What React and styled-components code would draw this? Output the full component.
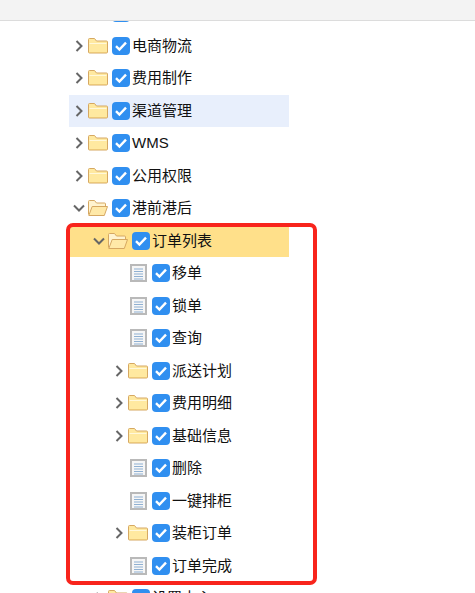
import React from "react";
import styled, { createGlobalStyle } from "styled-components";

const GlobalStyle = createGlobalStyle`
  html, body {
    margin: 0;
    padding: 0;
    background: #fff;
  }
  body {
    font-family: "Liberation Sans", "Noto Sans CJK SC", sans-serif;
  }
`;

const Page = styled.div`
  position: relative;
  width: 475px;
  height: 593px;
  overflow: hidden;
  background: #fff;
`;

const TopBar = styled.div`
  position: absolute;
  top: 0;
  left: 0;
  right: 0;
  height: 20px;
  background: #f3f3f3;
  border-bottom: 1px solid #dcdcdc;
  z-index: 2;
`;

const Tree = styled.ul`
  list-style: none;
  margin: -3px 0 0 69px;
  padding: 0;
  width: 220px;
`;

const Row = styled.li`
  display: flex;
  align-items: center;
  height: 32.5px;
  padding-left: ${(p) => p.$level * 20}px;
  background: ${(p) => (p.$tone === "selected" ? "#ffe08a" : p.$tone === "hover" ? "#e8effc" : "transparent")};
  font-size: 15px;
  color: #111;
  white-space: nowrap;
`;

const CaretSlot = styled.span`
  display: flex;
  justify-content: center;
  align-items: center;
  flex: none;
  width: 19px;
  height: 18px;
  color: #666;
`;

const IconSlot = styled.span`
  display: flex;
  justify-content: center;
  flex: none;
  width: 20px;
`;

const Check = styled.span`
  display: flex;
  align-items: center;
  justify-content: center;
  flex: none;
  width: 18px;
  height: 18px;
  margin: 0 2px 0 4px;
  border-radius: 4px;
  background: #308ff0;
`;

const Label = styled.span`
  line-height: 20px;
`;

const Highlight = styled.div`
  position: absolute;
  left: 66px;
  top: 223px;
  width: 251px;
  height: 362px;
  box-sizing: border-box;
  border: 4px solid #f8241c;
  border-radius: 7px;
  pointer-events: none;
`;

const Caret = ({ open }) => (
  <svg width="14" height="14" viewBox="0 0 14 14" fill="none" stroke="currentColor" strokeWidth="2">
    <path d={open ? "M2 4.5l5 5 5-5" : "M4.5 2l5 5-5 5"} />
  </svg>
);

const FolderClosed = () => (
  <svg width="20" height="16" viewBox="0 0 20 16">
    <path d="M.5 1.5a1 1 0 0 1 1-1h5l2 2.5h10a1 1 0 0 1 1 1v10a1 1 0 0 1-1 1h-17a1 1 0 0 1-1-1z" fill="#ffe9a0" stroke="#d6a862" />
    <path d="M1.5 5.5h17" stroke="#fff8dc" />
    <path d="M1 14.5h18" stroke="#ecc878" />
  </svg>
);

const FolderOpen = () => (
  <svg width="20" height="16" viewBox="0 0 20 16">
    <path d="M.5 14.5v-13a1 1 0 0 1 1-1h5l2 2.5h8a1 1 0 0 1 1 1v2" fill="#fff3cf" stroke="#d6a862" />
    <path d="M.8 15.5l3.4-9h15.3l-3.2 9z" fill="#ffe9a8" stroke="#d6a862" strokeLinejoin="round" />
  </svg>
);

const Doc = () => (
  <svg width="17" height="18" viewBox="0 0 17 18">
    <rect x="1" y="1" width="15" height="16" fill="#f6f6f6" stroke="#b9b9b9" strokeWidth="2" />
    <path d="M4 5h9M4 7.5h9M4 10h9M4 12.5h9M4 15h9" stroke="#8fb0d2" />
  </svg>
);

const Tick = () => (
  <svg width="14" height="14" viewBox="0 0 14 14" fill="none" stroke="#fff" strokeWidth="2.4">
    <path d="M2 7.2l3.4 3.3L12 3.6" />
  </svg>
);

const rows = [
  { label: "基础数据(内部)", level: 0, kind: "closed" },
  { label: "电商物流", level: 0, kind: "closed" },
  { label: "费用制作", level: 0, kind: "closed" },
  { label: "渠道管理", level: 0, kind: "closed", tone: "hover" },
  { label: "WMS", level: 0, kind: "closed" },
  { label: "公用权限", level: 0, kind: "closed" },
  { label: "港前港后", level: 0, kind: "open" },
  { label: "订单列表", level: 1, kind: "open", tone: "selected" },
  { label: "移单", level: 2, kind: "leaf" },
  { label: "锁单", level: 2, kind: "leaf" },
  { label: "查询", level: 2, kind: "leaf" },
  { label: "派送计划", level: 2, kind: "closed" },
  { label: "费用明细", level: 2, kind: "closed" },
  { label: "基础信息", level: 2, kind: "closed" },
  { label: "删除", level: 2, kind: "leaf" },
  { label: "一键排柜", level: 2, kind: "leaf" },
  { label: "装柜订单", level: 2, kind: "closed" },
  { label: "订单完成", level: 2, kind: "leaf" },
  { label: "设置中心", level: 1, kind: "closed" },
];

export default function App() {
  return (
    <Page>
      <GlobalStyle />
      <TopBar />
      <Tree>
        {rows.map((row) => (
          <Row key={row.label} $level={row.level} $tone={row.tone}>
            <CaretSlot>{row.kind !== "leaf" && <Caret open={row.kind === "open"} />}</CaretSlot>
            <IconSlot>
              {row.kind === "closed" && <FolderClosed />}
              {row.kind === "open" && <FolderOpen />}
              {row.kind === "leaf" && <Doc />}
            </IconSlot>
            <Check>
              <Tick />
            </Check>
            <Label>{row.label}</Label>
          </Row>
        ))}
      </Tree>
      <Highlight />
    </Page>
  );
}
